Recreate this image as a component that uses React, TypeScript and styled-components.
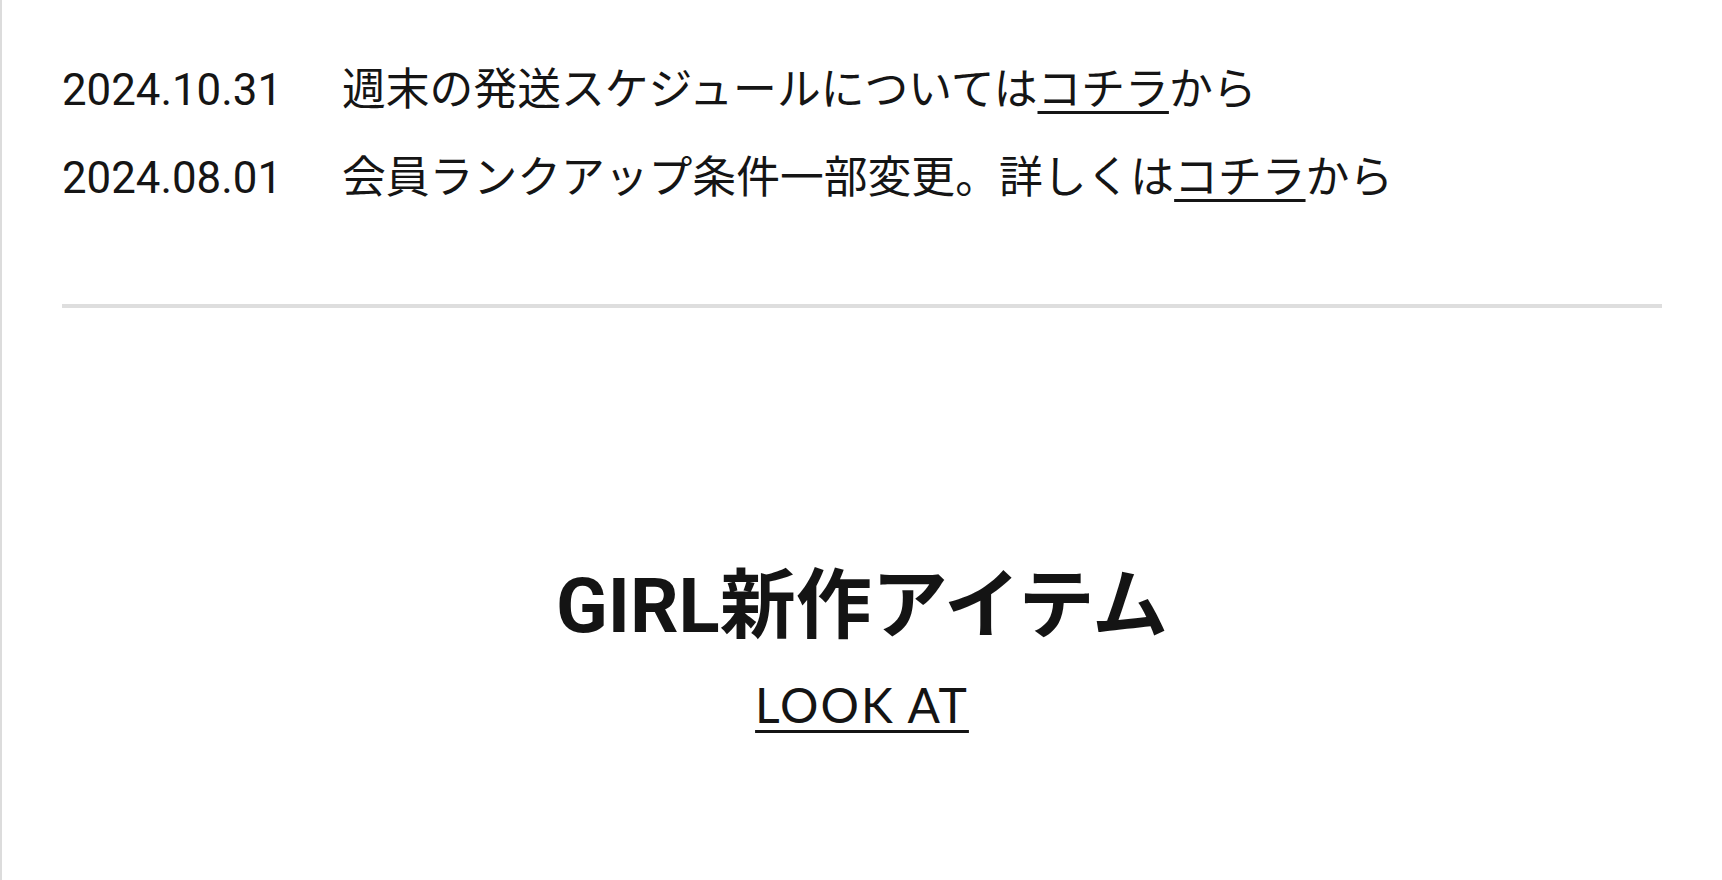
import React from 'react';
import styled, {createGlobalStyle} from 'styled-components';

const GlobalStyle = createGlobalStyle`
  html, body {
    margin: 0;
    padding: 0;
    background: #fff;
  }
  body {
    font-family: Roboto, "Noto Sans CJK JP", sans-serif;
    color: #151515;
  }
`;

type NewsItem = {
  date: string;
  before: string;
  link: string;
  after: string;
};

const news: NewsItem[] = [
  {date: '2024.10.31', before: '週末の発送スケジュールについては', link: 'コチラ', after: 'から'},
  {date: '2024.08.01', before: '会員ランクアップ条件一部変更。詳しくは', link: 'コチラ', after: 'から'},
];

const App: React.FC = () => {
  return (
    <Page>
      <GlobalStyle />
      <Inner>
        <NewsList>
          {news.map((item) => (
            <NewsRow key={item.date}>
              <NewsDate>{item.date}</NewsDate>
              <NewsText>
                {item.before}
                <NewsLink href="#">{item.link}</NewsLink>
                {item.after}
              </NewsText>
            </NewsRow>
          ))}
        </NewsList>
        <Divider />
        <Feature>
          <FeatureTitle>GIRL新作アイテム</FeatureTitle>
          <LookLink href="#">LOOK AT</LookLink>
        </Feature>
      </Inner>
    </Page>
  );
};

export default App;

const Page = styled.div`
  min-height: 880px;
  border-left: 2px solid #dcdcdc;
  box-sizing: border-box;
`;

const Inner = styled.div`
  width: 1600px;
  margin: 0 auto;
`;

const NewsList = styled.ul`
  list-style: none;
  margin: 0;
  padding: 46px 0 0;
`;

const NewsRow = styled.li`
  display: grid;
  grid-template-columns: 280px 1fr;
  font-size: 43.8px;
  line-height: 88px;
  height: 88px;
`;

const NewsDate = styled.span`
  font-family: Roboto, sans-serif;
`;

const NewsText = styled.span`
  font-family: Roboto, "Noto Sans CJK JP", sans-serif;
  white-space: nowrap;
`;

const NewsLink = styled.a`
  color: inherit;
  text-decoration: underline;
  text-decoration-thickness: 3px;
  text-underline-offset: 6px;
`;

const Divider = styled.hr`
  margin: 82px 0 0;
  border: 0;
  height: 4px;
  background: #dedede;
`;

const Feature = styled.section`
  display: flex;
  flex-direction: column;
  align-items: center;
  padding-top: 251px;
`;

const FeatureTitle = styled.h2`
  margin: 0;
  font-family: Roboto, "Noto Sans CJK JP", sans-serif;
  font-weight: 700;
  font-size: 76px;
  line-height: 94px;
  color: #141414;
`;

const LookLink = styled.a`
  margin-top: 24px;
  font-family: Lato, sans-serif;
  font-size: 48px;
  line-height: 56px;
  letter-spacing: 2px;
  color: #141414;
  text-decoration: underline;
  text-decoration-thickness: 3px;
  text-underline-offset: 7px;
`;
